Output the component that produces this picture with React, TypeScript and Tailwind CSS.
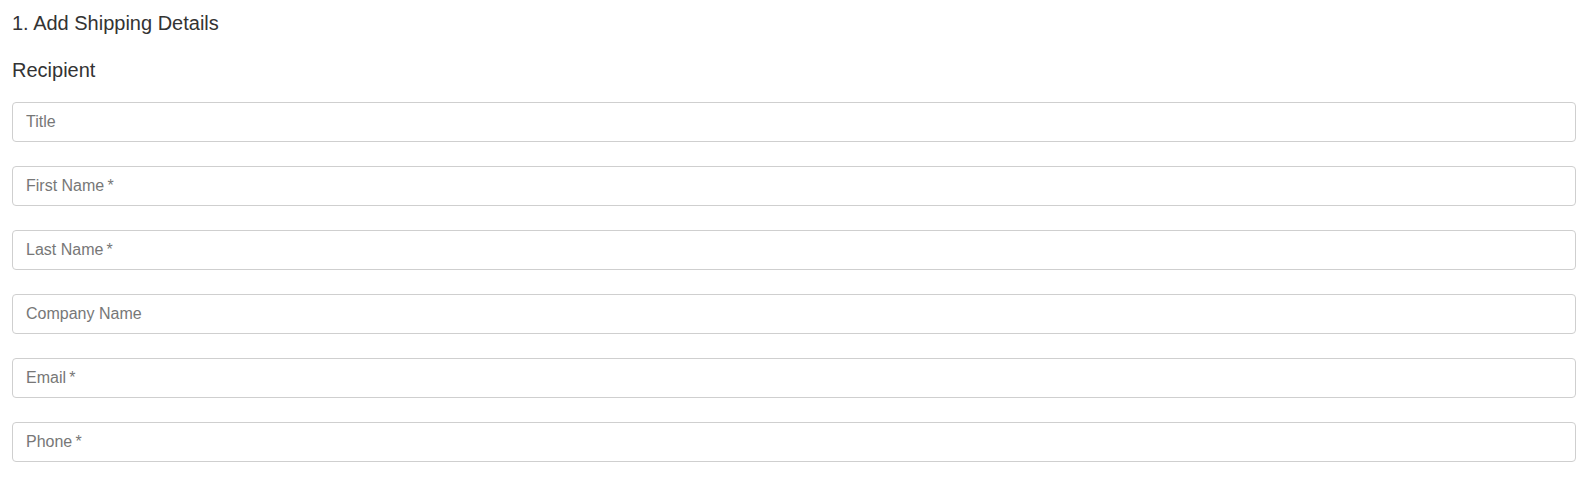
import React from 'react';

const fields = [
  { label: 'Title', required: false },
  { label: 'First Name', required: true },
  { label: 'Last Name', required: true },
  { label: 'Company Name', required: false },
  { label: 'Email', required: true },
  { label: 'Phone', required: true },
];

export default function App() {
  return (
    <div className="min-h-screen bg-white px-3 pt-[11px] font-['Liberation_Sans',Arial,sans-serif] text-[#333]">
      <h1 className="text-[20px] leading-6">1. Add Shipping Details</h1>
      <h2 className="mt-[23px] text-[20px] leading-6">Recipient</h2>

      <div className="mt-[20px] flex flex-col gap-6">
        {fields.map((f) => (
          <input
            key={f.label}
            type="text"
            placeholder={f.required ? `${f.label}\u2009*` : f.label}
            className="h-10 w-full rounded border border-[#cfcfcf] bg-white px-[13px] text-[16px] text-[#333] placeholder:text-[#777] outline-none"
          />
        ))}
      </div>
    </div>
  );
}
